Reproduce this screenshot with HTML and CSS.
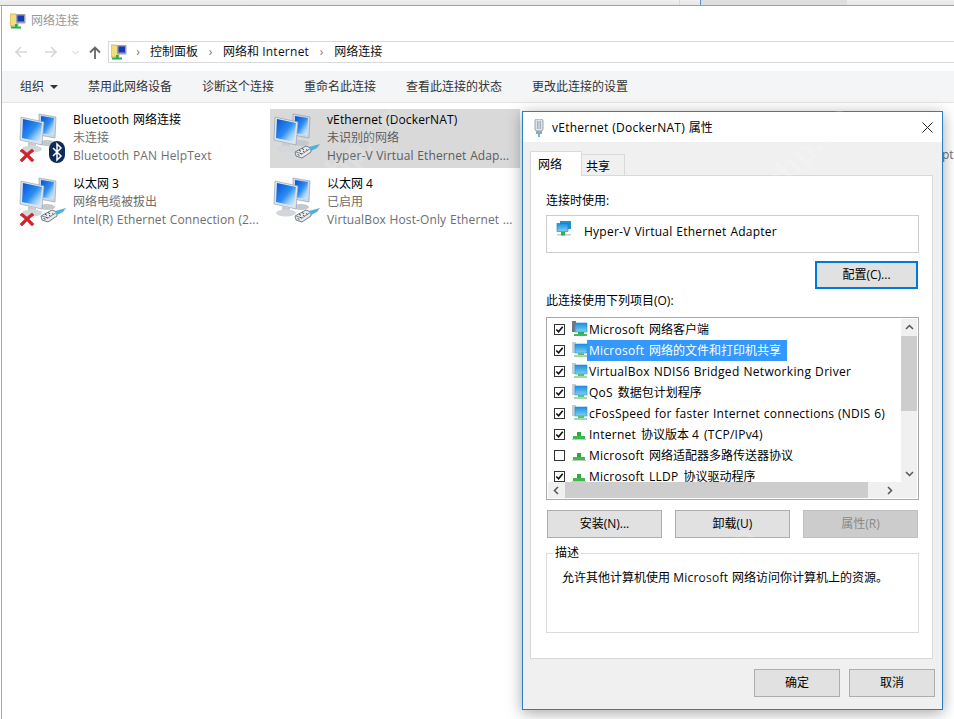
FILE: index.html
```html
<!DOCTYPE html>
<html lang="zh-CN">
<head>
<meta charset="utf-8">
<title>网络连接</title>
<link rel="stylesheet" href="styles.css">
</head>
<body>
<svg class="defs" aria-hidden="true">
  <defs>
    <linearGradient id="scr" x1="0" y1="0" x2="1" y2="1">
      <stop offset="0" stop-color="#0a4fd8"/><stop offset=".5" stop-color="#2a8cf0"/><stop offset=".75" stop-color="#9fd0f8"/><stop offset="1" stop-color="#e8f4fc"/>
    </linearGradient>
    <linearGradient id="sm" x1="0" y1="0" x2="0" y2="1">
      <stop offset="0" stop-color="#1a8fe0"/><stop offset="1" stop-color="#7fd0f5"/>
    </linearGradient>
    <symbol id="pcs" viewBox="0 0 40 40">
      <path d="M20 1l17 3-1 21-16-3z" fill="#cfd8e0" stroke="#8a98a8" stroke-width=".6"/>
      <path d="M22 3l13 2-1 17-12-2z" fill="url(#scr)"/>
      <ellipse cx="28" cy="30" rx="8" ry="3" fill="#c4c8cc"/>
      <path d="M2 4l23 5-2 23L1 27z" fill="#dfe5ea" stroke="#8a98a8" stroke-width=".6"/>
      <path d="M4 6l19 4-2 19L3 25z" fill="url(#scr)"/>
      <path d="M9 29l8 2 0 4-8-1z" fill="#c8ccd0"/>
      <ellipse cx="13" cy="36" rx="10" ry="3.4" fill="#d4d7da"/>
    </symbol>
    <symbol id="redx" viewBox="0 0 16 16">
      <path d="M3 2l5 4 5-4 2 2-5 4 5 5-2 2-5-5-5 5-2-2 5-5-5-4z" fill="#d8222a" stroke="#b01820" stroke-width=".5"/>
    </symbol>
    <symbol id="bt" viewBox="0 0 16 22">
      <rect width="16" height="22" rx="8" fill="#0f2c58"/>
      <path d="M4 7l8 8-4 4V3l4 4-8 8" fill="none" stroke="#fff" stroke-width="1.5"/>
    </symbol>
    <symbol id="plug" viewBox="0 0 27 16">
      <path d="M1 9l11-6 5 2 0 4-9 6-6-2z" fill="#e6eaee" stroke="#667078" stroke-width=".9"/>
      <path d="M2 9l6 2 9-6" fill="none" stroke="#667078" stroke-width=".8"/>
      <path d="M3.500 11.500l2 .8M6 10.200l1.800 1M9 8.200l1.500 .8M12 6.500l1.500 .8M8 5.500l2 1.200M5 7.200l2 1.200" stroke="#444" stroke-width=".9"/>
      <path d="M15 4l11-3-3 4-6 3z" fill="#4fb0dc"/>
    </symbol>
    <symbol id="ctl" viewBox="0 0 16 16">
      <path d="M0 1h6l1 1.500h1V13H0z" fill="#f4dc7c" stroke="#c8a840" stroke-width=".7"/>
      <rect x="6" y="1" width="9.500" height="9.500" rx="1" fill="#9aa0b4"/>
      <rect x="7.500" y="2.500" width="6.500" height="6" fill="#1838b8"/>
      <rect x="1" y="13.500" width="10" height="2" fill="#20b050"/>
      <rect x="5" y="11" width="2.500" height="3" fill="#20b050"/>
    </symbol>
    <symbol id="net" viewBox="0 0 16 16">
      <rect x="4" y="0" width="11" height="8" fill="#2090d0"/>
      <rect x="1" y="2.500" width="11" height="8" fill="url(#sm)" stroke="#1878c0" stroke-width=".6"/>
      <rect x="1" y="13" width="14" height="1.500" fill="#c8ccc8"/>
      <rect x="5" y="11" width="4" height="3.500" fill="#30b050"/>
    </symbol>
    <symbol id="svc" viewBox="0 0 17 17">
      <rect x="1" y="0" width="4" height="11" fill="#777"/>
      <rect x="4" y="2" width="12" height="9" fill="url(#sm)" stroke="#2090d0" stroke-width=".6"/>
      <rect x="7" y="11" width="6" height="2" fill="#30b050"/>
      <rect x="3" y="13" width="13" height="2" fill="#40b860"/>
    </symbol>
    <symbol id="svc2" viewBox="0 0 17 17">
      <rect x="1" y="0" width="4" height="11" fill="#c8d0d4"/>
      <rect x="4" y="2" width="12" height="9" fill="url(#sm)" stroke="#2090d0" stroke-width=".6"/>
      <rect x="7" y="11" width="6" height="2" fill="#60c070"/>
      <rect x="3" y="13" width="13" height="2" fill="#a0d8a8"/>
    </symbol>
    <symbol id="proto" viewBox="0 0 17 17">
      <rect x="6" y="6" width="4" height="6" fill="#30a840"/>
      <rect x="2" y="10" width="12" height="3" fill="#40b850"/>
      <rect x="1" y="13" width="14" height="1" fill="#c0c8c0"/>
    </symbol>
    <symbol id="check" viewBox="0 0 12 12">
      <path d="M2.500 6l2.500 2.500 4.500-5.500" fill="none" stroke="#111" stroke-width="1.800"/>
    </symbol>
    <symbol id="usb" viewBox="0 0 12 18">
      <rect x="2" y="0" width="8" height="12" rx="2" fill="#dfe4ea" stroke="#98a4b0"/>
      <rect x="4" y="2" width="1.500" height="8" fill="#a8b4c0"/>
      <rect x="6.500" y="2" width="1.500" height="8" fill="#a8b4c0"/>
      <path d="M3 12h6v3H3z" fill="#98a8b8"/>
      <path d="M5 15h2v3H5z" fill="#70b0d8"/>
    </symbol>
  </defs>
</svg>

<div class="desktop-strip">
  <span class="strip-a"></span><span class="strip-b"></span><span class="strip-c"></span>
</div>

<main class="window">
  <header class="titlebar">
    <svg class="ico16"><use href="#ctl"/></svg>
    <span class="title-text">网络连接</span>
  </header>

  <nav class="navrow">
    <svg class="nav-arrow" viewBox="0 0 12 12"><path d="M12 6H1M6 1L1 6l5 5" fill="none" stroke="#d8d8d8" stroke-width="1.600"/></svg>
    <svg class="nav-arrow fwd" viewBox="0 0 12 12"><path d="M0 6h11M6 1l5 5-5 5" fill="none" stroke="#d8d8d8" stroke-width="1.600"/></svg>
    <svg class="nav-chev" viewBox="0 0 7 5"><path d="M.5 1L3.500 4l3-3" fill="none" stroke="#d0d0d0"/></svg>
    <svg class="nav-up" viewBox="0 0 12 13"><path d="M6 13V1.500M1 6.500l5-5 5 5" fill="none" stroke="#666" stroke-width="1.800"/></svg>
    <div class="address">
      <svg class="ico16"><use href="#ctl"/></svg>
      <span class="crumb-sep first">›</span><span>控制面板</span>
      <span class="crumb-sep">›</span><span>网络和 <span class="en">Internet</span></span>
      <span class="crumb-sep">›</span><span>网络连接</span>
    </div>
  </nav>

  <div class="toolbar">
    <span class="tool org">组织<i class="caret"></i></span>
    <span class="tool">禁用此网络设备</span>
    <span class="tool">诊断这个连接</span>
    <span class="tool">重命名此连接</span>
    <span class="tool">查看此连接的状态</span>
    <span class="tool">更改此连接的设置</span>
  </div>

  <section class="items">
    <article class="item">
      <div class="item-icon"><svg class="pcs"><use href="#pcs"/></svg><svg class="badge-x"><use href="#redx"/></svg><svg class="badge-bt"><use href="#bt"/></svg></div>
      <div class="item-text"><div class="name"><span class="en">Bluetooth </span>网络连接</div><div class="sub">未连接</div><div class="sub en">Bluetooth PAN HelpText</div></div>
    </article>
    <article class="item selected">
      <div class="item-icon"><svg class="pcs"><use href="#pcs"/></svg><svg class="badge-plug"><use href="#plug"/></svg></div>
      <div class="item-text"><div class="name en">vEthernet (DockerNAT)</div><div class="sub">未识别的网络</div><div class="sub en">Hyper-V Virtual Ethernet Adap...</div></div>
    </article>
    <article class="item stray"><div class="stray-text">pt</div></article>
    <article class="item">
      <div class="item-icon"><svg class="pcs"><use href="#pcs"/></svg><svg class="badge-x"><use href="#redx"/></svg><svg class="badge-plug"><use href="#plug"/></svg></div>
      <div class="item-text"><div class="name">以太网 3</div><div class="sub">网络电缆被拔出</div><div class="sub en">Intel(R) Ethernet Connection (2...</div></div>
    </article>
    <article class="item">
      <div class="item-icon"><svg class="pcs"><use href="#pcs"/></svg><svg class="badge-plug"><use href="#plug"/></svg></div>
      <div class="item-text"><div class="name">以太网 4</div><div class="sub">已启用</div><div class="sub en">VirtualBox Host-Only Ethernet ...</div></div>
    </article>
  </section>
</main>

<aside class="dialog">
  <header class="dlg-title">
    <svg class="usb"><use href="#usb"/></svg>
    <span class="dlg-title-text"><span class="en">vEthernet (DockerNAT) </span>属性</span>
    <svg class="close" viewBox="0 0 11 11"><path d="M.5.500l10 10M10.500.500l-10 10" stroke="#222" fill="none"/></svg>
  </header>
  <div class="dlg-body">
    <div class="tabs">
      <span class="tab active">网络</span>
      <span class="tab">共享</span>
    </div>
    <div class="panel">
      <div class="label l1">连接时使用:</div>
      <div class="adapter"><svg class="ico16"><use href="#net"/></svg><span class="en">Hyper-V Virtual Ethernet Adapter</span></div>
      <div class="cfg-row"><button class="btn focus">配置(C)...</button></div>
      <div class="label l2">此连接使用下列项目(O):</div>
      <div class="listbox">
        <div class="list-main">
          <ul class="rows">
            <li class="row"><span class="cb"><svg><use href="#check"/></svg></span><svg class="ico17"><use href="#svc"/></svg><span class="row-t"><span class="en">Microsoft </span>网络客户端</span></li>
            <li class="row"><span class="cb"><svg><use href="#check"/></svg></span><svg class="ico17"><use href="#svc2"/></svg><span class="row-t sel"><span class="en">Microsoft </span>网络的文件和打印机共享</span></li>
            <li class="row"><span class="cb"><svg><use href="#check"/></svg></span><svg class="ico17"><use href="#svc2"/></svg><span class="row-t en roomy">VirtualBox NDIS6 Bridged Networking Driver</span></li>
            <li class="row"><span class="cb"><svg><use href="#check"/></svg></span><svg class="ico17"><use href="#svc2"/></svg><span class="row-t"><span class="en">QoS </span>数据包计划程序</span></li>
            <li class="row"><span class="cb"><svg><use href="#check"/></svg></span><svg class="ico17"><use href="#svc2"/></svg><span class="row-t en">cFosSpeed for faster Internet connections (NDIS 6)</span></li>
            <li class="row"><span class="cb"><svg><use href="#check"/></svg></span><svg class="ico17"><use href="#proto"/></svg><span class="row-t"><span class="en">Internet </span>协议版本 <span class="en">4 (TCP/IPv4)</span></span></li>
            <li class="row"><span class="cb"></span><svg class="ico17"><use href="#proto"/></svg><span class="row-t"><span class="en">Microsoft </span>网络适配器多路传送器协议</span></li>
            <li class="row"><span class="cb"><svg><use href="#check"/></svg></span><svg class="ico17"><use href="#proto"/></svg><span class="row-t"><span class="en">Microsoft LLDP </span>协议驱动程序</span></li>
          </ul>
          <div class="vscroll">
            <svg class="sb-arrow" viewBox="0 0 9 6"><path d="M1 5l3.500-3.500L8 5" fill="none" stroke="#555" stroke-width="1.500"/></svg>
            <div class="vtrack"><div class="vthumb"></div></div>
            <svg class="sb-arrow" viewBox="0 0 9 6"><path d="M1 1l3.500 3.500L8 1" fill="none" stroke="#555" stroke-width="1.500"/></svg>
          </div>
        </div>
        <div class="hscroll">
          <svg class="sb-arrow-h" viewBox="0 0 6 9"><path d="M5 1L1.500 4.500 5 8" fill="none" stroke="#555" stroke-width="1.500"/></svg>
          <div class="hthumb"></div>
          <svg class="sb-arrow-h" viewBox="0 0 6 9"><path d="M1 1l3.500 3.500L1 8" fill="none" stroke="#555" stroke-width="1.500"/></svg>
        </div>
      </div>
      <div class="btn-row">
        <button class="btn wide">安装(N)...</button>
        <button class="btn wide">卸载(U)</button>
        <button class="btn wide disabled">属性(R)</button>
      </div>
      <fieldset class="group">
        <legend class="legend">描述</legend>
        <p class="desc">允许其他计算机使用 <span class="en">Microsoft </span>网络访问你计算机上的资源。</p>
      </fieldset>
    </div>
    <div class="dlg-actions">
      <button class="btn act">确定</button>
      <button class="btn act">取消</button>
    </div>
  </div>
</aside>

<span class="wm wm1" aria-hidden="true">php.cn</span>
<span class="wm wm2" aria-hidden="true">php.cn</span>
<span class="wm wm3" aria-hidden="true">php.cn</span>
</body>
</html>
```
FILE: styles.css
```css
* { box-sizing: border-box; }
html, body { margin: 0; padding: 0; }
body {
  width: 954px; height: 719px; overflow: hidden; position: relative; background: #fff;
  font: 12px/18px "Open Sans", "Noto Sans CJK SC", sans-serif; color: #000;
}
.defs { position: absolute; width: 0; height: 0; }
.en { letter-spacing: .25px; word-spacing: .4px; }
.items .en { letter-spacing: .12px; }
.row-t .en { word-spacing: 1.500px; }
.row-t.roomy { letter-spacing: .32px; }

.desktop-strip { height: 6px; display: flex; background: linear-gradient(#efefef, #e6e6e6); border-bottom: 1px solid #a2a2a2; }
.strip-a { width: 680px; border-right: 1px solid #d8d8d8; }
.strip-b { width: 21px; border-right: 1px solid #5f8fc0; }
.strip-c { width: 146px; background: #dedede; }

.window { height: 713px; margin-left: 1px; border-left: 1px solid #aaa; background: #fff; }
.titlebar { height: 35px; display: flex; align-items: center; gap: 5px; padding: 0 0 5px 8px; }
.title-text { color: #999; }
.ico16 { width: 16px; height: 16px; flex: none; }

.navrow { height: 22px; display: flex; align-items: center; position: relative; }
.nav-arrow { width: 12px; height: 12px; margin-left: 13px; }
.nav-arrow.fwd { margin-left: 18px; }
.nav-chev { width: 7px; height: 5px; margin-left: 15px; }
.nav-up { width: 12px; height: 13px; margin-left: 10px; }
.address { flex: 1; height: 22px; margin-left: 7px; border: 1px solid #d9d9d9; border-right: 0; display: flex; align-items: center; padding-left: 2px; color: #111; }
.crumb-sep { width: 10px; text-align: center; color: #777; margin: 0 7.5px; }
.crumb-sep.first { margin-left: 6px; margin-right: 7px; }

.toolbar { margin-top: 8px; height: 32px; background: #f4f5f7; border-bottom: 1px solid #e4e4e4; display: flex; align-items: center; gap: 30px; padding-left: 18px; color: #333; }
.tool { white-space: nowrap; }
.org { display: flex; align-items: center; gap: 6px; }
.caret { width: 0; height: 0; border: 4px solid transparent; border-top-color: #333; border-bottom: 0; }

.items { display: grid; grid-template-columns: 254px 254px 1fr; grid-auto-rows: 59px; row-gap: 5px; padding: 6px 0 0 14px; }
.item { display: flex; position: relative; padding-left: 57px; padding-top: 2px; }
.item:nth-child(2) { margin-right: 4px; }
.item.selected { background: #d9d9d9; }
.item-text { min-width: 0; white-space: nowrap; }
.name { color: #000; }
.sub { color: #6e6e6e; }
.selected .sub { color: #5c5c5c; }
.item-icon { position: absolute; left: 0; top: 0; width: 57px; height: 59px; }
.pcs { position: absolute; left: 3px; top: 4px; width: 40px; height: 40px; }
.badge-x { position: absolute; left: 3px; top: 38px; width: 16px; height: 16px; }
.badge-bt { position: absolute; left: 33px; top: 32px; width: 16px; height: 22px; }
.badge-plug { position: absolute; left: 24px; top: 34px; width: 27px; height: 16px; }
.stray { padding: 37px 0 0 418px; overflow: hidden; }
.stray-text { color: #6e6e6e; }

.dialog { position: absolute; left: 522px; top: 111px; width: 421px; height: 599px; border: 1px solid #2b7ec2; background: #f0f0f0; box-shadow: 0 3px 14px rgba(0,0,0,.35); display: flex; flex-direction: column; }
.dlg-title { height: 30px; flex: none; background: #fff; display: flex; align-items: center; padding: 1px 9px 0 10px; }
.usb { width: 12px; height: 18px; }
.dlg-title-text { margin-left: 7px; flex: 1; }
.close { width: 11px; height: 11px; }
.dlg-body { flex: 1; padding: 10px 9px 0 7px; }
.tabs { display: flex; align-items: flex-end; height: 24px; position: relative; z-index: 1; margin-bottom: -1px; }
.tab { width: 43px; height: 22px; line-height: 22px; padding: 1px 0 0 4px; border: 1px solid #d9d9d9; border-bottom: 0; border-left: 0; }
.tab.active { width: 52px; height: 25px; line-height: 22px; padding: 2px 0 0 7px; background: #fff; border-left: 1px solid #d9d9d9; }
.panel { height: 484px; background: #fff; border: 1px solid #d9d9d9; padding: 0 13px 0 15px; }
.l1 { padding-top: 16px; height: 39px; }
.adapter { height: 38px; border: 1px solid #ccc; display: flex; align-items: flex-start; padding: 5px 0 0 9px; gap: 12px; line-height: 18px; }
.adapter span { padding-top: 2px; }
.cfg-row { display: flex; justify-content: flex-end; padding: 8px 1px 0 0; }
.btn { font: inherit; color: #000; background: #e1e1e1; border: 1px solid #adadad; padding: 0; }
.btn.focus { width: 103px; height: 28px; border: 2px solid #0078d7; }
.l2 { height: 28px; padding-top: 3px; }
.listbox { height: 183px; border: 1px solid #a9a9a9; background: #fff; padding: 1px; display: flex; flex-direction: column; }
.list-main { height: 164px; display: flex; overflow: hidden; }
.rows { list-style: none; margin: 0; padding: 0; width: 353px; flex: none; overflow: hidden; }
.row { height: 21px; display: flex; align-items: center; white-space: nowrap; padding-left: 6px; }
.cb { width: 11px; height: 11px; border: 1px solid #333; display: block; flex: none; position: relative; }
.cb svg { position: absolute; left: -1px; top: -1px; width: 11px; height: 11px; }
.ico17 { width: 17px; height: 17px; flex: none; margin-left: 6px; }
.row-t { margin-left: 1px; line-height: 21px; }
.row-t.sel { background: #3399ff; color: #fff; padding: 0 6px 0 2px; margin-left: -1px; }
.vscroll { width: 17px; flex: none; background: #f0f0f0; display: flex; flex-direction: column; align-items: center; }
.sb-arrow { width: 9px; height: 6px; margin: 5px 0; flex: none; }
.vtrack { flex: 1; width: 100%; }
.vthumb { height: 75px; background: #cdcdcd; margin-top: 1px; }
.hscroll { height: 16px; background: #f0f0f0; display: flex; align-items: center; }
.sb-arrow-h { width: 6px; height: 9px; flex: none; margin: 0 6px 0 5px; }
.hthumb { width: 303px; height: 100%; background: #cdcdcd; margin-right: 14px; }
.btn-row { display: flex; gap: 13px; padding: 10px 0 0 1px; }
.btn.wide { width: 115px; height: 28px; }
.btn.disabled { background: #cccccc; border-color: #bfbfbf; color: #8a8a8a; }
.group { margin: 8px 0 0; padding: 0; height: 87px; border: 1px solid #dcdcdc; position: relative; }
.legend { margin-left: 6px; padding: 0 2px; line-height: 14px; }
.desc { margin: 9px 0 0 15px; }
.dlg-actions { display: flex; justify-content: flex-end; gap: 9px; padding: 10px 0 0; margin-right: -2px; }
.btn.act { width: 86px; height: 28px; }

.wm { position: absolute; font: bold 34px/40px "Liberation Sans", sans-serif; color: rgba(255,255,255,.18); transform: rotate(-45deg); pointer-events: none; white-space: nowrap; }
.wm1 { left: 300px; top: 130px; }
.wm2 { left: 750px; top: 130px; }
.wm3 { left: 655px; top: 550px; }
```
